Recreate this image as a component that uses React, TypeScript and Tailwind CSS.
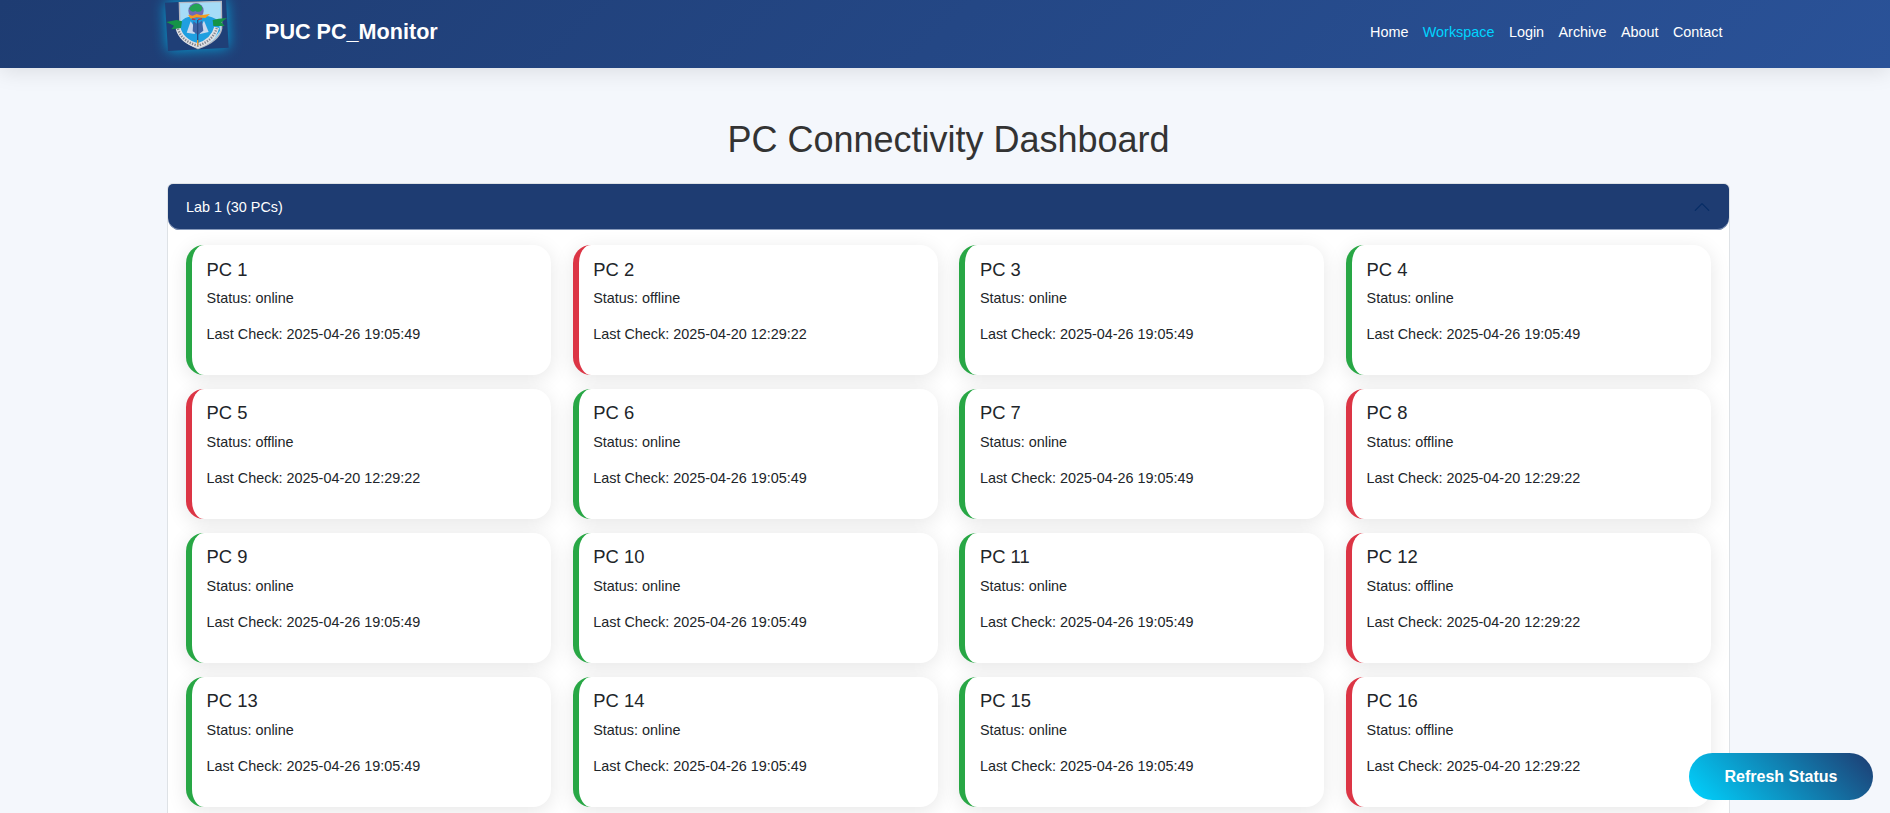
import React from "react";

const navItems = ["Home", "Workspace", "Login", "Archive", "About", "Contact"];
const offline = new Set([2, 5, 8, 12, 16]);

const pcs = Array.from({ length: 16 }, (_, i) => {
  const id = i + 1;
  const online = !offline.has(id);
  return {
    id,
    online,
    lastCheck: online ? "2025-04-26 19:05:49" : "2025-04-20 12:29:22",
  };
});

function Logo() {
  return (
    <svg width="90" height="68" viewBox="0 0 270 204" className="block shrink-0 overflow-visible" aria-hidden="true">
      <defs>
        <filter id="glow" x="-60%" y="-60%" width="220%" height="220%" colorInterpolationFilters="sRGB">
          <feGaussianBlur stdDeviation="20" />
        </filter>
      </defs>
      <path d="M45 8 L228 -2 L236 143 L54 153 Z" fill="#00b4e6" opacity="0.85" filter="url(#glow)" />
      <path d="M45 8 L228 -2 L236 143 L54 153 Z" fill="#1f3f77" />
      <path d="M88 8 L214 4 L215 86 Q208 124 144 146 Q92 126 90 88 Z" fill="#a6dcf7" stroke="#b4b8c2" strokeWidth="4" />
      <path d="M92 66 Q104 50 124 50 L160 48 Q184 46 206 62 L210 92 Q190 124 143 132 Q100 124 90 90 Z" fill="#1f9fe0" />
      <circle cx="138" cy="32" r="23" fill="#6f6ab6" />
      <path d="M117 26 Q128 9 146 12 Q161 20 156 30 Q146 40 136 32 Q126 40 117 26 Z" fill="#23a455" />
      <path d="M114 44 L128 47 L140 42 L152 46 L180 42 L166 54 L140 52 L122 56 Z" fill="#f59a1f" />
      <path d="M126 57 L136 59 M144 59 L156 56" stroke="#d2303a" strokeWidth="4" fill="none" />
      <path d="M122 64 L138 88 L134 102 L110 98 Z" fill="#c9d8ee" />
      <path d="M162 62 L148 88 L150 102 L176 96 Z" fill="#c9d8ee" />
      <path d="M130 64 L142 72 L156 62 L160 92 L144 104 L128 94 Z" fill="#3f63a4" />
      <path d="M84 84 Q94 124 144 137 Q190 122 200 82" fill="none" stroke="#e0e1e5" strokeWidth="15" />
      <path d="M84 86 Q94 124 144 137 Q190 122 200 84" fill="none" stroke="#80858f" strokeWidth="7" strokeDasharray="4 4" />
      <path d="M49 66 L80 60 L96 64 L93 84 L64 88 L72 77 Z" fill="#159447" />
      <path d="M231 54 L206 56 L188 60 L190 78 L224 78 L214 67 Z" fill="#159447" />
      <path d="M143 60 L143 134" stroke="#274b85" strokeWidth="4" />
      <path d="M143 120 L143 136" stroke="#e8a030" strokeWidth="4" />
    </svg>
  );
}

function PcCard({ id, online, lastCheck }: { id: number; online: boolean; lastCheck: string }) {
  return (
    <article
      className={`h-[130px] rounded-[18px] border-l-6 bg-white pt-[13.5px] pl-[14.6px] shadow-[0_4px_20px_rgba(0,0,0,0.1)] ${
        online ? "border-[#28a745]" : "border-[#dc3545]"
      }`}
    >
      <h5 className="text-[18.4px] leading-[22px] text-[#212529]">PC {id}</h5>
      <p className="mt-[6.5px] text-[14.4px] leading-[22px] text-[#212529]">Status: {online ? "online" : "offline"}</p>
      <p className="mt-[14px] text-[14.4px] leading-[22px] text-[#212529]">Last Check: {lastCheck}</p>
    </article>
  );
}

export default function App() {
  return (
    <div className="h-[813px] overflow-hidden bg-[#f4f7fc] font-['Liberation_Sans',Arial,sans-serif]">
      <header className="relative flex h-[68px] items-center bg-linear-135/srgb from-[#1e3c72] to-[#2a5298] pr-[167.5px] pl-[150px] shadow-[0_4px_20px_rgba(0,0,0,0.1)]">
        <Logo />
        <span className="mb-[4px] ml-[25px] text-[21.6px] font-bold text-white">PUC PC_Monitor</span>
        <nav className="mb-[2px] ml-auto flex gap-[14.4px] text-[14.4px] font-medium text-white">
          {navItems.map((item) => (
            <a key={item} className={item === "Workspace" ? "text-[#00d4ff]" : ""}>
              {item}
            </a>
          ))}
        </nav>
      </header>

      <main className="ml-[167px] w-[1563px]">
        <h1 className="pt-[50px] pb-[22px] text-center text-[36px] leading-[43px] text-[#333333]">
          PC Connectivity Dashboard
        </h1>
        <section className="rounded-t-[6px] border border-[#dee2e6] bg-white">
          <button className="flex h-[46px] w-full items-center justify-between rounded-t-[5px] rounded-b-[12px] bg-[#1e3c72] pr-[18px] pl-[18px] text-[14.4px] text-white shadow-[inset_0_-1px_0_#8799ba]">
            <span className="pt-[2px]">Lab 1 (30 PCs)</span>
            <svg width="18" height="18" viewBox="0 0 16 16" fill="none" stroke="#052c65" strokeLinecap="round" strokeLinejoin="round">
              <path d="M2 11 L8 5 L14 11" />
            </svg>
          </button>
          <div className="grid grid-cols-4 gap-x-[21.6px] gap-y-[13.9px] px-[18px] pt-[15px] pb-4">
            {pcs.map((pc) => (
              <PcCard key={pc.id} {...pc} />
            ))}
          </div>
        </section>
      </main>

      <button className="fixed right-[17px] bottom-[13px] h-[47px] w-[184px] rounded-full bg-linear-45/srgb from-[#00d4ff] to-[#1e3c72] text-[16px] font-bold text-white">
        Refresh Status
      </button>
    </div>
  );
}
